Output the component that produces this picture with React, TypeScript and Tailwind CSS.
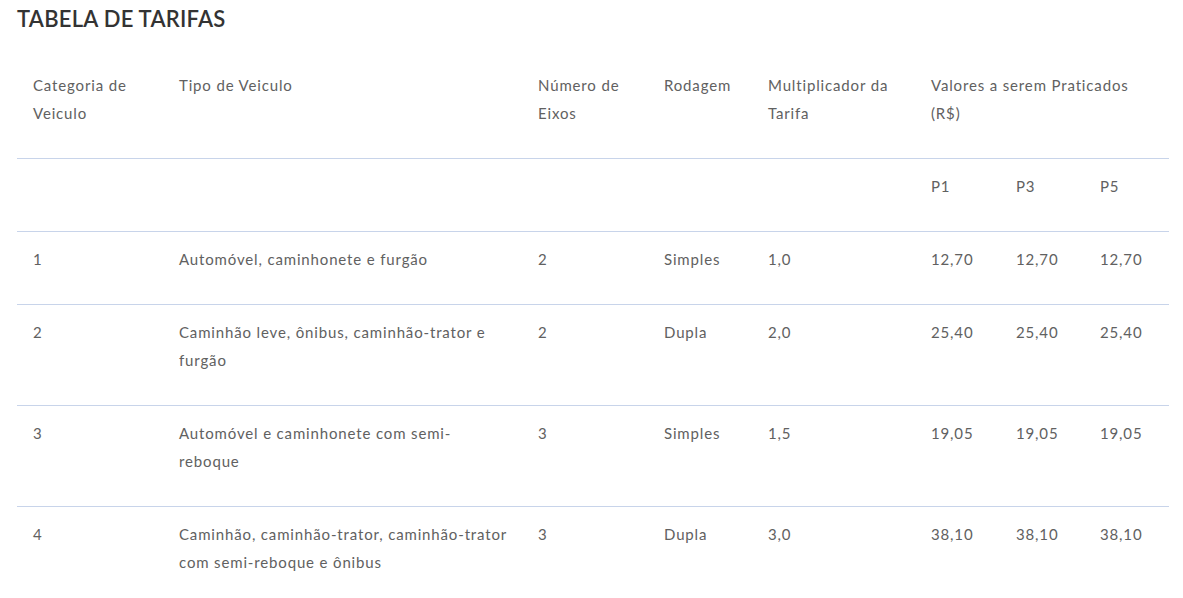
const cols = [146, 359, 126, 104, 163, 85, 84, 85];

const rows = [
  { cat: "1", tipo: ["Automóvel, caminhonete e furgão"], eixos: "2", rod: "Simples", mult: "1,0", val: "12,70" },
  { cat: "2", tipo: ["Caminhão leve, ônibus, caminhão-trator e", "furgão"], eixos: "2", rod: "Dupla", mult: "2,0", val: "25,40" },
  { cat: "3", tipo: ["Automóvel e caminhonete com semi-", "reboque"], eixos: "3", rod: "Simples", mult: "1,5", val: "19,05" },
  { cat: "4", tipo: ["Caminhão, caminhão-trator, caminhão-trator", "com semi-reboque e ônibus"], eixos: "3", rod: "Dupla", mult: "3,0", val: "38,10" },
];

function Lines({ lines }: { lines: string[] }) {
  return (
    <>
      {lines.map((l, i) => (
        <span key={i} className="block whitespace-nowrap">
          {l}
        </span>
      ))}
    </>
  );
}

const td = "px-4 pt-[13px] pb-[31px] align-top text-left font-normal";

export default function App() {
  return (
    <div className="min-h-screen bg-white px-[17px] pt-[6px] font-['Lato',sans-serif] text-[#616161]">
      <h2 className="text-[22px] font-semibold uppercase leading-[26px] tracking-[0.25px] text-[#333333]">
        Tabela de Tarifas
      </h2>

      <table className="mt-[26px] w-[1152px] table-fixed border-collapse text-[15px] leading-[28px] tracking-[0.85px]">
        <colgroup>
          {cols.map((w, i) => (
            <col key={i} style={{ width: w }} />
          ))}
        </colgroup>
        <thead>
          <tr className="border-b border-[#c8d4ea]">
            <th className={td}>
              <Lines lines={["Categoria de", "Veiculo"]} />
            </th>
            <th className={td}>Tipo de Veiculo</th>
            <th className={td}>
              <Lines lines={["Número de", "Eixos"]} />
            </th>
            <th className={td}>Rodagem</th>
            <th className={td}>
              <Lines lines={["Multiplicador da", "Tarifa"]} />
            </th>
            <th className={td} colSpan={3}>
              <Lines lines={["Valores a serem Praticados", "(R$)"]} />
            </th>
          </tr>
          <tr className="border-b border-[#c8d4ea]">
            <th className={td} colSpan={5}></th>
            <th className={td}>P1</th>
            <th className={td}>P3</th>
            <th className={td}>P5</th>
          </tr>
        </thead>
        <tbody>
          {rows.map((r, i) => (
            <tr key={r.cat} className={i < rows.length - 1 ? "border-b border-[#c8d4ea]" : ""}>
              <td className={td}>{r.cat}</td>
              <td className={td}>
                <Lines lines={r.tipo} />
              </td>
              <td className={td}>{r.eixos}</td>
              <td className={td}>{r.rod}</td>
              <td className={td}>{r.mult}</td>
              <td className={td}>{r.val}</td>
              <td className={td}>{r.val}</td>
              <td className={td}>{r.val}</td>
            </tr>
          ))}
        </tbody>
      </table>
    </div>
  );
}
